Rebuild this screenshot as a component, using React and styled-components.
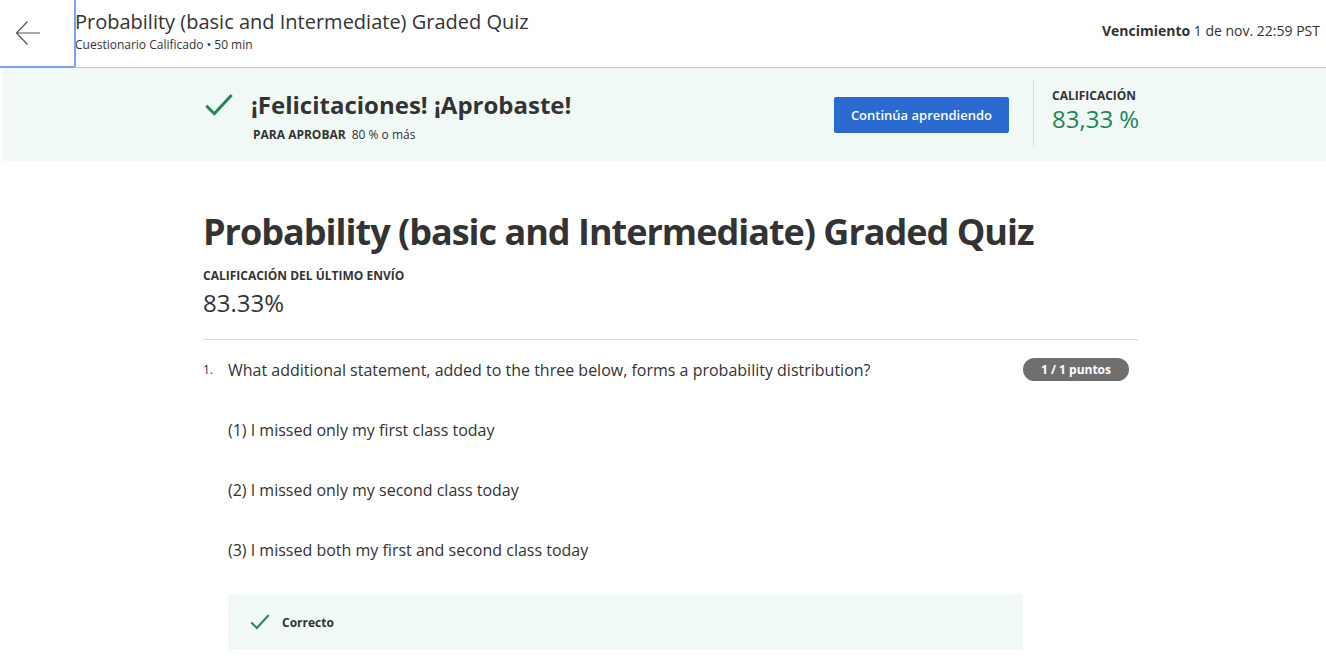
import React from 'react';
import styled, { createGlobalStyle } from 'styled-components';

const GlobalStyle = createGlobalStyle`
  body {
    margin: 0;
    background: #fff;
    font-family: 'Open Sans', 'Noto Sans', sans-serif;
    color: #1f1f1f;
  }
`;

const Header = styled.header`
  display: flex;
  align-items: stretch;
  height: 67px;
  border-bottom: 1px solid #c8c8c8;
`;

const BackButton = styled.button`
  width: 76px;
  height: 68px;
  flex: none;
  display: flex;
  align-items: center;
  justify-content: flex-start;
  padding: 0 0 0 15px;
  background: #fff;
  border: none;
  border-right: 2px solid #7f9ef0;
  border-bottom: 2px solid #7f9ef0;
  border-radius: 0 0 3px 0;
  position: relative;
  z-index: 1;
  color: #555;
  cursor: pointer;
`;

const HeaderText = styled.div`
  flex: 1;
  padding: 9px 0 0 0;
  margin-left: -1px;
`;

const HeaderTitle = styled.div`
  font-size: 20px;
  line-height: 26px;
  color: #333;
`;

const HeaderSub = styled.div`
  font-size: 12px;
  line-height: 18px;
  color: #333;
  margin-top: 1px;
`;

const Due = styled.div`
  font-size: 14px;
  color: #333;
  padding: 21px 6px 0 0;
  b { font-weight: 700; }
`;

const Banner = styled.section`
  margin: 0 0 0 3px;
  background: #f1f9f6;
  height: 93px;
`;

const BannerInner = styled.div`
  width: 935px;
  margin-left: 200px;
  height: 100%;
  display: flex;
  align-items: center;
`;

const BannerMain = styled.div`
  flex: 1;
  display: flex;
  align-items: flex-start;
  gap: 16px;
  padding-top: 2px;
`;

const BannerTitle = styled.div`
  font-size: 24px;
  font-weight: 700;
  color: #333;
  line-height: 32px;
`;

const PassLine = styled.div`
  font-size: 12px;
  color: #333;
  margin-top: 5px;
  padding-left: 2px;
  b { font-weight: 700; margin-right: 6px; }
`;

const PrimaryButton = styled.button`
  font-family: inherit;
  background: #2a6ad1;
  color: #fff;
  border: none;
  border-radius: 2px;
  height: 36px;
  padding: 0 17px;
  font-size: 13px;
  font-weight: 600;
  margin-right: 24px;
`;

const GradeBox = styled.div`
  border-left: 1px solid #d9dedc;
  align-self: stretch;
  margin: 12px 0 14px;
  padding: 8px 0 0 18px;
  width: 86px;
  white-space: nowrap;
`;

const SmallLabel = styled.div`
  font-size: 12px;
  font-weight: 700;
  color: #333;
  line-height: 16px;
  text-transform: uppercase;
`;

const GradeValue = styled.div`
  font-size: 24px;
  color: #1f8354;
  line-height: 28px;
  margin-top: 1px;
`;

const Main = styled.main`
  width: 935px;
  margin-left: 203px;
  padding-top: 47px;
`;

const PageTitle = styled.h1`
  margin: 0;
  font-size: 36px;
  line-height: 48px;
  font-weight: 700;
  letter-spacing: -1px;
  color: #333;
`;

const LastLabel = styled(SmallLabel)`
  margin-top: 12px;
`;

const LastValue = styled.div`
  font-size: 24px;
  color: #333;
  line-height: 32px;
  margin-top: 3px;
`;

const Rule = styled.hr`
  border: none;
  border-top: 1px solid #dadada;
  margin: 20px 0 0;
`;

const Question = styled.div`
  display: grid;
  grid-template-columns: 25px 1fr auto;
  padding: 18px 9px 0 0;
`;

const QNum = styled.div`
  font-size: 12px;
  color: #333;
  padding-top: 3px;
`;

const QText = styled.div`
  font-size: 16px;
  color: #333;
  line-height: 24px;
`;

const Points = styled.span`
  background: #6f6f6f;
  color: #fff;
  font-size: 12px;
  font-weight: 700;
  height: 23px;
  line-height: 23px;
  border-radius: 12px;
  padding: 0 18px;
  align-self: start;
`;

const QBody = styled.div`
  grid-column: 2 / 3;
`;

const Option = styled.div`
  font-size: 16px;
  line-height: 24px;
  color: #333;
  margin-top: 36px;
`;

const Feedback = styled.div`
  margin-top: 32px;
  width: 795px;
  height: 56px;
  background: #f1f9f6;
  display: flex;
  align-items: center;
  gap: 11px;
  padding-left: 21px;
  box-sizing: border-box;
  font-size: 12px;
  font-weight: 700;
  color: #333;
`;

const Check = ({ size }) => (
  <svg width={size} height={size} viewBox="0 0 24 24" fill="none">
    <path d="M2.5 12.5l6 6L21.5 4.5" stroke="#1f8354" strokeWidth="2.2" />
  </svg>
);

const ArrowLeft = () => (
  <svg width="26" height="26" viewBox="0 0 26 26" fill="none">
    <path d="M25 13H1.5M12.5 1.5L1.5 13l11 11.5" stroke="#555" strokeWidth="1.2" />
  </svg>
);

export default function App() {
  return (
    <>
      <GlobalStyle />
      <Header>
        <BackButton aria-label="Volver"><ArrowLeft /></BackButton>
        <HeaderText>
          <HeaderTitle>Probability (basic and Intermediate) Graded Quiz</HeaderTitle>
          <HeaderSub>Cuestionario Calificado • 50 min</HeaderSub>
        </HeaderText>
        <Due><b>Vencimiento</b> 1 de nov. 22:59 PST</Due>
      </Header>

      <Banner>
        <BannerInner>
          <BannerMain>
            <Check size={32} />
            <div>
              <BannerTitle>¡Felicitaciones! ¡Aprobaste!</BannerTitle>
              <PassLine><b>PARA APROBAR</b>80 % o más</PassLine>
            </div>
          </BannerMain>
          <PrimaryButton>Continúa aprendiendo</PrimaryButton>
          <GradeBox>
            <SmallLabel>Calificación</SmallLabel>
            <GradeValue>83,33 %</GradeValue>
          </GradeBox>
        </BannerInner>
      </Banner>

      <Main>
        <PageTitle>Probability (basic and Intermediate) Graded Quiz</PageTitle>
        <LastLabel>Calificación del último envío</LastLabel>
        <LastValue>83.33%</LastValue>
        <Rule />
        <Question>
          <QNum>1.</QNum>
          <QText>What additional statement, added to the three below, forms a probability distribution?</QText>
          <Points>1 / 1 puntos</Points>
          <QBody>
            <Option>(1) I missed only my first class today</Option>
            <Option>(2) I missed only my second class today</Option>
            <Option>(3) I missed both my first and second class today</Option>
            <Feedback><Check size={22} />Correcto</Feedback>
          </QBody>
        </Question>
      </Main>
    </>
  );
}
